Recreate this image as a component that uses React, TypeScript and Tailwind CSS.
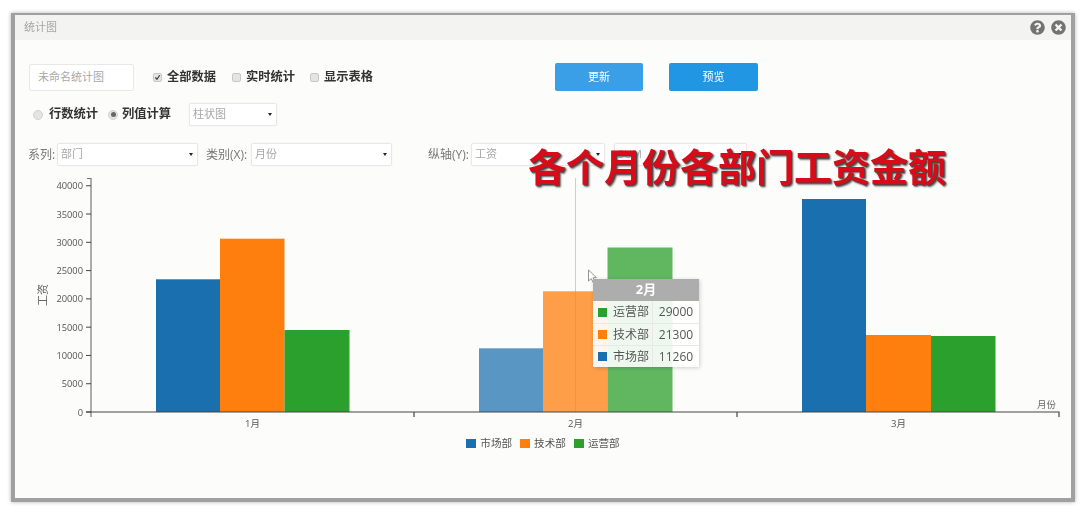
import { FaQuestionCircle, FaTimesCircle } from "react-icons/fa";

const BLUE = "#1a6fae";
const ORANGE = "#ff7f0e";
const GREEN = "#2ca02c";

const bars = [
  { x: 156, w: 64, top: 279.3, c: BLUE, o: 1 },
  { x: 220, w: 64.5, top: 238.7, c: ORANGE, o: 1 },
  { x: 284.5, w: 65, top: 330, c: GREEN, o: 1 },
  { x: 479, w: 64, top: 348.3, c: BLUE, o: 0.72 },
  { x: 543, w: 64.5, top: 291.3, c: ORANGE, o: 0.75 },
  { x: 607.5, w: 65, top: 247.5, c: GREEN, o: 0.75 },
  { x: 802, w: 64, top: 199, c: BLUE, o: 1 },
  { x: 866, w: 65, top: 335, c: ORANGE, o: 1 },
  { x: 931, w: 64.5, top: 336, c: GREEN, o: 1 },
];

const yTicks = [0, 5000, 10000, 15000, 20000, 25000, 30000, 35000, 40000];

function Check({ checked }: { checked?: boolean }) {
  return (
    <span className="flex h-[9px] w-[9px] items-center justify-center rounded-[2px] border border-[#c8c8c8] bg-[#e4e4e4]">
      {checked && (
        <svg viewBox="0 0 10 10" className="h-[9px] w-[9px]">
          <path d="M2 5 L4.2 7.5 L8.2 1.8" fill="none" stroke="#444" strokeWidth="1.8" />
        </svg>
      )}
    </span>
  );
}

function Radio({ checked }: { checked?: boolean }) {
  return (
    <span className="flex h-[10px] w-[10px] items-center justify-center rounded-full border border-[#d0d0d0] bg-[#e4e4e4]">
      {checked && <span className="h-[5px] w-[5px] rounded-full bg-[#666]" />}
    </span>
  );
}

function Select({ label, className }: { label: string; className: string }) {
  return (
    <div
      className={`flex h-[23px] items-center justify-between rounded-[2px] border border-[#e8e8e8] bg-white pl-[3px] pr-[4px] shadow-[0_0_2px_rgba(0,0,0,0.06)] ${className}`}
    >
      <span className="text-[11px] text-[#a8a8a8]">{label}</span>
      <span className="h-0 w-0 border-x-[2px] border-t-[3px] border-x-transparent border-t-[#222]" />
    </div>
  );
}

function LegendItem({ color, label }: { color: string; label: string }) {
  return (
    <div className="flex items-center gap-[4px]">
      <span className="h-[9px] w-[10px]" style={{ background: color }} />
      <span className="text-[10.6px] leading-none text-[#555]">{label}</span>
    </div>
  );
}

const rows = [
  { c: GREEN, n: "运营部", v: "29000" },
  { c: ORANGE, n: "技术部", v: "21300" },
  { c: BLUE, n: "市场部", v: "11260" },
];

export default function App() {
  return (
    <div className="h-[514px] w-[1086px] overflow-hidden bg-white pl-[11px] pt-[13px] font-['Open_Sans','Noto_Sans_CJK_SC',sans-serif]">
      <div className="relative h-[489px] w-[1064px] border-x-4 border-b-4 border-t-2 border-[#a0a0a0] bg-[#fcfcfa] shadow-[0_0_4px_rgba(0,0,0,0.3)] blur-[0.5px]">
        <div className="flex h-[25px] items-center justify-between bg-[#f3f3f1] pl-[9px] pr-[5px]">
          <span className="text-[11px] text-[#a5a5a5]">统计图</span>
          <div className="flex items-center gap-[6px]">
            <FaQuestionCircle className="h-[15px] w-[15px] text-[#737373]" />
            <FaTimesCircle className="h-[15px] w-[15px] text-[#737373]" />
          </div>
        </div>

        <div className="flex h-[28px] items-center pl-[14px] mt-[23px]">
          <div className="flex h-[27px] w-[105px] items-center rounded-[2px] border border-[#e8e8e8] bg-white pl-[8px] text-[11px] text-[#a8a8a8]">
            未命名统计图
          </div>
          <span className="ml-[19px]"><Check checked /></span>
          <span className="ml-[5px] text-[12.25px] font-bold text-[#333]">全部数据</span>
          <span className="ml-[16px]"><Check /></span>
          <span className="ml-[5px] text-[12.25px] font-bold text-[#333]">实时统计</span>
          <span className="ml-[15px]"><Check /></span>
          <span className="ml-[5px] text-[12.25px] font-bold text-[#333]">显示表格</span>
          <button className="ml-[182px] h-[28px] w-[88px] rounded-[2px] bg-[#3a9fe6] text-[11px] text-white">更新</button>
          <button className="ml-[26px] h-[28px] w-[89px] rounded-[2px] bg-[#2196e3] text-[11px] text-white">预览</button>
        </div>

        <div className="mt-[12px] flex h-[23px] items-center pl-[18px]">
          <Radio />
          <span className="ml-[6px] text-[12.25px] font-bold text-[#333]">行数统计</span>
          <span className="ml-[10px]"><Radio checked /></span>
          <span className="ml-[4px] text-[12.25px] font-bold text-[#333]">列值计算</span>
          <Select label="柱状图" className="ml-[18px] w-[88px]" />
        </div>

        <div className="mt-[17px] flex h-[23px] items-center pl-[13px] text-[12px] text-[#777]">
          <span className="w-[29px]">系列:</span>
          <Select label="部门" className="w-[141px]" />
          <span className="ml-[8px] w-[45px]">类别(X):</span>
          <Select label="月份" className="w-[141px]" />
          <span className="ml-[36px] w-[43px]">纵轴(Y):</span>
          <Select label="工资" className="w-[134px]" />
          <Select label="SUM" className="ml-[9px] w-[133px]" />
        </div>

        <svg viewBox="15 170 1056 265" className="mt-[4px] block h-[265px] w-[1056px]">
          {bars.map((b, i) => (
            <rect key={i} x={b.x} y={b.top} width={b.w} height={412 - b.top} fill={b.c} opacity={b.o} />
          ))}
          <line x1="575.5" y1="178" x2="575.5" y2="412" stroke="#9a9a9a" strokeOpacity="0.6" strokeWidth="0.8" />
          <path d="M87 178.5 H91 V417" fill="none" stroke="#777" strokeWidth="1.2" />
          <path d="M86 412 H1059 V417 M414 412 V417 M737 412 V417" fill="none" stroke="#444" strokeWidth="1.2" />
          {yTicks.map((t) => {
            const y = 412 - (t / 5000) * 28.28;
            return (
              <g key={t}>
                <line x1="86" x2="91" y1={y} y2={y} stroke="#444" />
                <text x="83" y={y + 3.5} textAnchor="end" className="fill-[#555] text-[9.3px]">
                  {t}
                </text>
              </g>
            );
          })}
          <text transform="translate(47 295) rotate(-90)" textAnchor="middle" className="fill-[#666] text-[11px]">
            工资
          </text>
          <text x="252.5" y="427" textAnchor="middle" className="fill-[#555] text-[9.5px]">1月</text>
          <text x="575.5" y="427" textAnchor="middle" className="fill-[#555] text-[9.5px]">2月</text>
          <text x="898.5" y="427" textAnchor="middle" className="fill-[#555] text-[9.5px]">3月</text>
          <text x="1037" y="408" className="fill-[#666] text-[9.5px]">月份</text>
          <path d="M588.5 270 V281 L591.2 278.6 L593.2 282.6 L595 281.7 L593 277.8 L596.4 277.6 Z" fill="#fff" stroke="#777" strokeWidth="0.8" />
        </svg>

        <div className="mt-[3px] flex justify-center gap-[8px]">
          <LegendItem color={BLUE} label="市场部" />
          <LegendItem color={ORANGE} label="技术部" />
          <LegendItem color={GREEN} label="运营部" />
        </div>

        <div className="absolute left-[578px] top-[264px] w-[106px] bg-white/90 shadow-[1px_1px_4px_rgba(0,0,0,0.18)]">
          <div className="flex h-[22px] items-center justify-center bg-[#a9a9a9]/95 text-[13px] font-bold text-white">2月</div>
          {rows.map((r, i) => (
            <div key={r.n} className={`flex h-[22px] items-center text-[12px] text-[#555] ${i > 0 ? "border-t border-[#e8e8e8]" : ""}`}>
              <div className="flex h-full w-[60px] items-center gap-[6px] border-r border-[#e8e8e8] pl-[5px]">
                <span className="h-[9px] w-[9px]" style={{ background: r.c }} />
                <span>{r.n}</span>
              </div>
              <span className="flex-1 text-center">{r.v}</span>
            </div>
          ))}
        </div>

        <div className="absolute left-[513px] top-[127px] whitespace-nowrap text-[38px] font-bold leading-[48px] text-[#d80c18] [text-shadow:1px_1px_1px_#444,2px_2px_2px_#666]">
          各个月份各部门工资金额
        </div>
      </div>
    </div>
  );
}
